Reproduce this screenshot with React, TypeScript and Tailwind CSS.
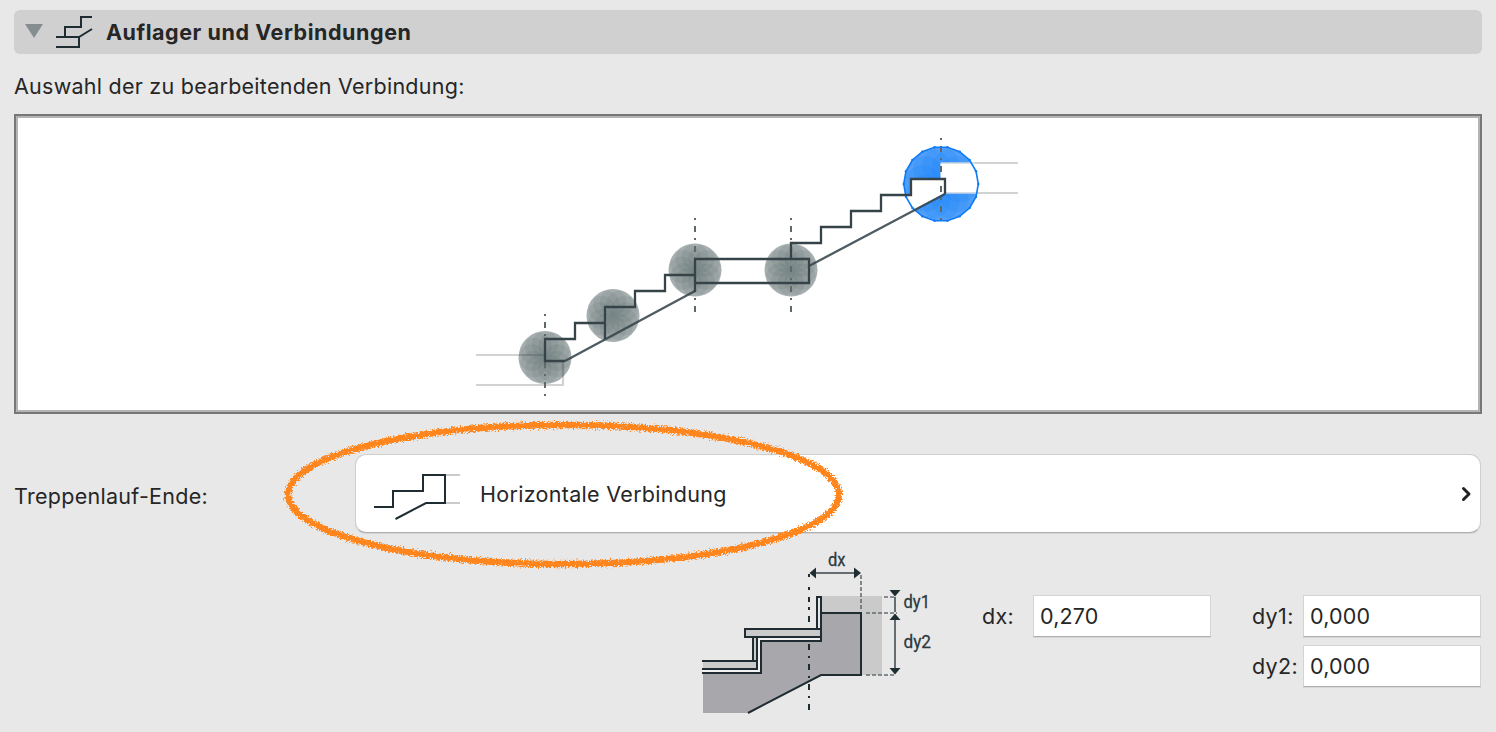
import { useState } from 'react';

const INK = '#1f2d33';

interface SupportNodeProps {
    cx: number;
    cy: number;
}

const PETALS = Array.from({ length: 12 }, (_, i) => (i * 30 * Math.PI) / 180);
const CORNERS = Array.from({ length: 18 }, (_, i) => (i * 20 * Math.PI) / 180);

// Grey handle made of overlapping translucent discs
function SupportNode({ cx, cy }: SupportNodeProps) {
    return (
        <g fill="#2f4144">
            <circle cx={cx} cy={cy} r={26.5} fillOpacity={0.37} />
            {PETALS.map((a) => (
                <circle
                    key={a}
                    cx={cx + Math.cos(a) * 13.2}
                    cy={cy + Math.sin(a) * 13.2}
                    r={13.2}
                    fillOpacity={0.09}
                />
            ))}
        </g>
    );
}

function ActiveNode({ cx, cy }: SupportNodeProps) {
    return (
        <g fill="#0a78f5">
            <circle cx={cx} cy={cy} r={37} fillOpacity={0.66} />
            {PETALS.map((a) => (
                <circle
                    key={a}
                    cx={cx + Math.cos(a) * 18.5}
                    cy={cy + Math.sin(a) * 18.5}
                    r={18.5}
                    fillOpacity={0.15}
                />
            ))}
        </g>
    );
}

function StairPreview() {
    const outline = CORNERS.map((a) => [941 + Math.cos(a) * 37.3, 184 + Math.sin(a) * 37.3]);

    return (
        <svg viewBox="18 118 1460 292" className="block h-full w-full" fill="none">
            <ActiveNode cx={941} cy={184} />
            <path d="M940.5 163H1018V193H945L809 266L881 195H911V179H940.5Z" fill="#fff" />

            {/* Floor slabs */}
            <g stroke="#d2d2d2" strokeWidth="2.2">
                <path d="M476 355H545M476 385H563V361" />
                <path d="M975 163H1018M975 193H1018" />
            </g>
            <path d="M941 163H975M945 193H977" stroke="#c6d3e4" strokeWidth="1.5" />

            <SupportNode cx={545} cy={357.5} />
            <SupportNode cx={613} cy={315.5} />
            <SupportNode cx={695} cy={270} />
            <SupportNode cx={791} cy={270} />

            <g stroke="#5f686b" strokeWidth="2" strokeDasharray="2 6 6 6">
                <path d="M545 314V396" />
                <path d="M695 218V313" />
                <path d="M791 218V313" />
                <path d="M941 138V220" />
            </g>

            <polygon
                points={outline.map((p) => p.join(',')).join(' ')}
                stroke="#0f7bf7"
                strokeWidth="1.6"
            />
            {outline.map(([x, y]) => (
                <circle key={`${x}-${y}`} cx={x} cy={y} r={1.2} fill="#0f7bf7" />
            ))}

            <g stroke="#36444a" strokeWidth="2.3">
                <path d="M565 361L695 291M809 266L945 194" strokeOpacity="0.88" />
                <path d="M565 361H545V339H575V323H605V307H635V291H665V275H695M605 307V339" />
                <path d="M695 292V259H809V283H695" />
                <path d="M791 259V243H821V227H851V211H881V195H911V179H945V194" />
            </g>
        </svg>
    );
}

function HeaderIcon() {
    return (
        <svg width="38" height="34" viewBox="55 15 38 34" fill="none" stroke={INK} strokeWidth="2">
            <path d="M56 37H79L92 29" />
            <path d="M65 37V27H81V17H92" />
            <path d="M56 47H79V37" />
        </svg>
    );
}

function ConnectionIcon() {
    return (
        <svg width="88" height="50" viewBox="373 469 88 50" fill="none" stroke={INK} strokeWidth="2" className="overflow-visible">
            <path d="M445 475H460M445 503H460" stroke="#cacaca" />
            <path d="M374 507H393V491H423V475H445V503H426L395.500 519" />
        </svg>
    );
}

function DimensionDrawing() {
    return (
        <svg width="240" height="172" viewBox="700 548 240 172" className="block" fill="none">
            <rect x="821" y="596" width="61" height="79" fill="#cacaca" />
            <path
                d="M703 673H761V641H821V613H861V675H821L748 713H703Z"
                fill="#a8a7ac"
            />
            <path d="M703 669H757V637H821V641H761V673H703Z" fill="#f1f1f1" />
            <path d="M703 661H757V669H703Z" fill="#cacaca" />
            <rect x="753" y="637" width="4" height="24" fill="#cacaca" />
            <path d="M809 574V577M809 587V590M809 597V602M809 607V610M809 616V622" stroke={INK} strokeWidth="2" />
            <g stroke={INK} strokeWidth="2">
                <path d="M702 661H757M753 661V637M702 669H757V637" />
                <path d="M702 673H761V641H821V597H817V629" />
                <rect x="745" y="629" width="76" height="8" fill="#cacaca" />
                <path d="M821 613H861V675H821L748 713" />
                <path d="M809 644V712" strokeDasharray="6 6 2 6" />
            </g>

            {/* Dimension lines */}
            <g stroke="#666d70" strokeWidth="2">
                <path d="M813 573H857M895 597V612M895 618V670" />
                <path d="M861 575V611M884 597H895M866 613H897M866 675H896" strokeWidth="1.6" strokeDasharray="4 2" />
            </g>
            <g fill={INK}>
                <path d="M809.500 573L816 567.500V578.500Z" />
                <path d="M861 573L854 567.500V578.500Z" />
                <path d="M889.500 590H900.500L895 596.500Z" />
                <path d="M889.500 620H900.500L895 613.500Z" />
                <path d="M889.500 668H900.500L895 674.500Z" />
            </g>
            <g fill="#2d393e" stroke="#2d393e" strokeWidth="0.3" className="font-['Roboto',sans-serif] text-[18px]">
                <text x="828" y="566" textLength="17.500" lengthAdjust="spacingAndGlyphs">dx</text>
                <text x="903.500" y="608" textLength="26.500" lengthAdjust="spacingAndGlyphs">dy1</text>
                <text x="903.500" y="648" textLength="27.500" lengthAdjust="spacingAndGlyphs">dy2</text>
            </g>
        </svg>
    );
}

// Hand drawn marker around the selected connection
function MarkerEllipse() {
    return (
        <svg
            width="580"
            height="164"
            viewBox="274 412 580 164"
            className="pointer-events-none absolute left-[274px] top-[412px]"
            fill="none"
        >
            <filter id="crayon" x="-5%" y="-10%" width="110%" height="120%">
                <feTurbulence type="fractalNoise" baseFrequency="0.6" numOctaves="3" seed="4" result="noise" />
                <feDisplacementMap in="SourceGraphic" in2="noise" scale="7" xChannelSelector="R" yChannelSelector="G" />
            </filter>
            <ellipse
                cx="563.500"
                cy="494.500"
                rx="275.500"
                ry="69.500"
                stroke="#ff851f"
                strokeWidth="6.500"
                filter="url(#crayon)"
            />
        </svg>
    );
}

interface NumberFieldProps {
    label: string;
    value: string;
    onChange: (value: string) => void;
}

function NumberField({ label, value, onChange }: NumberFieldProps) {
    return (
        <label className="flex h-[42px] items-center">
            <span className="w-[51px] tracking-[0.35px]">{label}</span>
            <input
                value={value}
                onChange={(e) => onChange(e.target.value)}
                className="h-[42px] w-[178px] border border-[#d4d4d4] border-b-[#b0b0b0] bg-white pl-1.5 tracking-[0.15px] shadow-[0_1px_0_#d6d6d6] outline-none"
            />
        </label>
    );
}

export default function App() {
    const [open, setOpen] = useState(true);
    const [dx, setDx] = useState('0,270');
    const [dy1, setDy1] = useState('0,000');
    const [dy2, setDy2] = useState('0,000');

    return (
        <div className="relative h-[732px] w-[1496px] overflow-hidden bg-[#e8e8e8] px-3.5 pt-2.5 font-['Inter',sans-serif] text-[21.5px] leading-[28px] text-[#262626]">
            {/* Section header */}
            <button
                onClick={() => setOpen(!open)}
                className="flex h-11 w-full items-center rounded-md bg-[#d0d0d0] pl-[11px] text-left"
            >
                <svg width="18" height="14" viewBox="0 0 18 14" className="-mt-0.5">
                    <path d="M0 0H18L9 14Z" fill="#868d91" />
                </svg>
                <span className="ml-3"><HeaderIcon /></span>
                <span className="ml-[13px] font-bold tracking-[0.56px]">Auflager und Verbindungen</span>
            </button>

            {open && (
                <>
                    <p className="mt-[18px] h-[28px] whitespace-nowrap tracking-[0.25px]">
                        Auswahl der zu bearbeitenden Verbindung:
                    </p>
                    <div className="mt-3.5 h-[300px] border-2 border-[#777]">
                        <div className="h-full border-2 border-[#b4b4b4] bg-white">
                            <StairPreview />
                        </div>
                    </div>

                    {/* Connection type */}
                    <div className="mt-10 flex h-[79px] items-center pr-px">
                        <span className="mt-[5px] w-[341px] tracking-[0.28px]">Treppenlauf-Ende:</span>
                        <button className="flex h-[79px] flex-1 items-center rounded-[11px] border border-[#cfcfcf] border-b-[#b0b0b0] bg-white pl-[17px] pr-[8px] shadow-[0_1px_0_#d4d4d4]">
                            <ConnectionIcon />
                            <span className="ml-[19px] tracking-[0.3px]">Horizontale Verbindung</span>
                            <svg width="11" height="16" viewBox="0 0 11 16" fill="none" className="ml-auto">
                                <path d="M2.500 2.500L8 8L2.500 13.500" stroke="#222" strokeWidth="3" strokeLinecap="round" strokeLinejoin="round" />
                            </svg>
                        </button>
                    </div>

                    {/* Dimensions */}
                    <div className="mt-[15px] flex items-start pl-[686px]">
                        <DimensionDrawing />
                        <div className="ml-[42px] mt-[47px]">
                            <NumberField label="dx:" value={dx} onChange={setDx} />
                        </div>
                        <div className="ml-[41px] mt-[47px] flex flex-col gap-2">
                            <NumberField label="dy1:" value={dy1} onChange={setDy1} />
                            <NumberField label="dy2:" value={dy2} onChange={setDy2} />
                        </div>
                    </div>
                </>
            )}

            <MarkerEllipse />
        </div>
    );
}
